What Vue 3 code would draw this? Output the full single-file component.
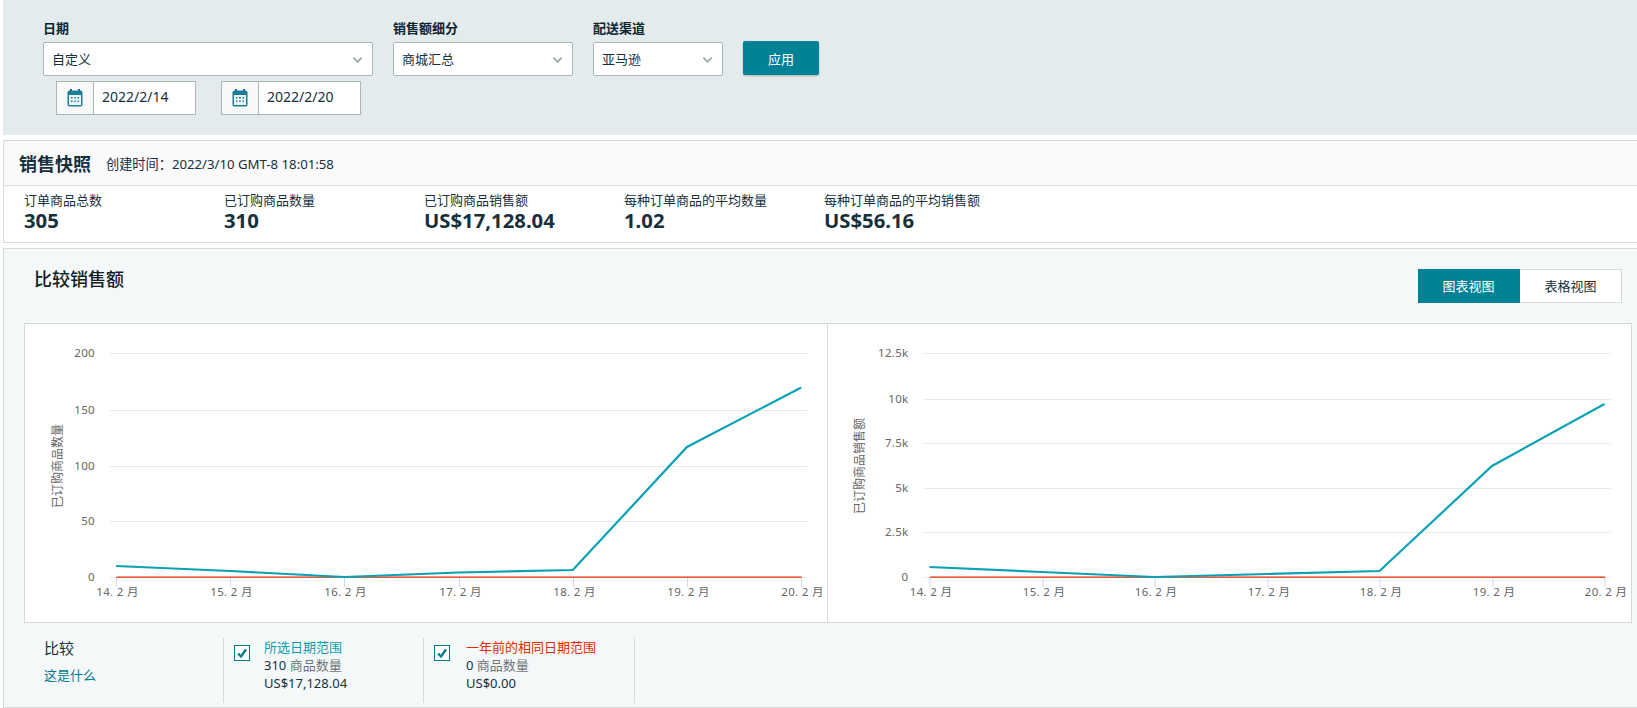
<script setup>
const metrics = [
  { label: '订单商品总数', value: '305', width: 200 },
  { label: '已订购商品数量', value: '310', width: 200 },
  { label: '已订购商品销售额', value: 'US$17,128.04', width: 200 },
  { label: '每种订单商品的平均数量', value: '1.02', width: 200 },
  { label: '每种订单商品的平均销售额', value: 'US$56.16', width: 240 },
]
const days = ['14. 2 月', '15. 2 月', '16. 2 月', '17. 2 月', '18. 2 月', '19. 2 月', '20. 2 月']
const makeChart = (o) => ({
  ...o,
  xs: days.map((_, i) => Math.round(o.x0 + i * o.dx) + 0.5),
  points: o.ys.map((y, i) => `${o.x0 + i * o.dx},${y}`).join(' '),
})
const charts = [
  makeChart({
    viewBox: '25 324 802 298', title: '已订购商品数量', titleX: 62, tickX: 95, gridX1: 110, gridX2: 807,
    x0: 116, dx: 114.2,
    ticks: [['200', 353], ['150', 410], ['100', 466], ['50', 521], ['0', 577]],
    ys: [566, 571, 577, 572.5, 570, 447, 387.5],
  }),
  makeChart({
    viewBox: '828 324 802 298', title: '已订购商品销售额', titleX: 863, tickX: 908, gridX1: 923, gridX2: 1610,
    x0: 929, dx: 112.5,
    ticks: [['12.5k', 353], ['10k', 399], ['7.5k', 443], ['5k', 488], ['2.5k', 532], ['0', 577]],
    ys: [567, 572, 577, 574, 571, 466, 404],
  }),
]
const legends = [
  { name: '所选日期范围', color: 'teal', count: '310', total: 'US$17,128.04' },
  { name: '一年前的相同日期范围', color: 'red', count: '0', total: 'US$0.00' },
]
</script>

<template>
  <div class="page">
    <section class="filters">
      <div class="field field-date">
        <div class="label">日期</div>
        <div class="select"><span>自定义</span><svg class="chev" viewBox="0 0 12 8"><path d="M1.5 1.5 6 6l4.5-4.5" /></svg></div>
        <div class="dates">
          <div v-for="d in ['2022/2/14', '2022/2/20']" :key="d" class="date">
            <div class="date-icon">
              <svg width="16" height="18" viewBox="0 0 16 18">
                <rect x="3" y="0" width="2" height="3" fill="#1a6f86" />
                <rect x="11" y="0" width="2" height="3" fill="#1a6f86" />
                <rect x="0.5" y="1.5" width="15" height="16" rx="2" fill="#1b7f99" />
                <rect x="2" y="6" width="12" height="10" fill="#eaf3f6" />
                <g fill="#1b7f99">
                  <rect x="4" y="8" width="1.5" height="1.5" /><rect x="7.2" y="8" width="1.5" height="1.5" /><rect x="10.5" y="8" width="1.5" height="1.5" />
                  <rect x="4" y="11.5" width="1.5" height="1.5" /><rect x="7.2" y="11.5" width="1.5" height="1.5" /><rect x="10.5" y="11.5" width="1.5" height="1.5" />
                </g>
              </svg>
            </div>
            <div class="date-value">{{ d }}</div>
          </div>
        </div>
      </div>
      <div class="field field-breakdown">
        <div class="label">销售额细分</div>
        <div class="select"><span>商城汇总</span><svg class="chev" viewBox="0 0 12 8"><path d="M1.5 1.5 6 6l4.5-4.5" /></svg></div>
      </div>
      <div class="field field-channel">
        <div class="label">配送渠道</div>
        <div class="select"><span>亚马逊</span><svg class="chev" viewBox="0 0 12 8"><path d="M1.5 1.5 6 6l4.5-4.5" /></svg></div>
      </div>
      <button class="apply">应用</button>
    </section>

    <section class="snapshot">
      <header class="snap-head">
        <h2>销售快照</h2>
        <span class="stamp">创建时间：2022/3/10 GMT-8 18:01:58</span>
      </header>
      <div class="metrics">
        <div v-for="m in metrics" :key="m.label" class="metric" :style="{ width: m.width + 'px' }">
          <div class="metric-label">{{ m.label }}</div>
          <div class="metric-value">{{ m.value }}</div>
        </div>
      </div>
    </section>

    <section class="compare">
      <header class="compare-head">
        <h2>比较销售额</h2>
        <div class="toggle">
          <div class="tab active">图表视图</div>
          <div class="tab">表格视图</div>
        </div>
      </header>
      <div class="panel">
        <div v-for="c in charts" :key="c.title" class="chart">
          <svg class="chart-svg" :viewBox="c.viewBox">
            <g v-for="t in c.ticks" :key="t[0]">
              <line :x1="c.gridX1" :x2="c.gridX2" :y1="t[1] + 0.5" :y2="t[1] + 0.5" class="grid" />
              <text :x="c.tickX" :y="t[1] + 4.4" text-anchor="end" class="tick">{{ t[0] }}</text>
            </g>
            <g v-for="(d, i) in days" :key="d">
              <line :x1="c.xs[i]" :x2="c.xs[i]" y1="577" y2="587" class="xtick" />
              <text :x="c.xs[i] + 1" y="596" text-anchor="middle" class="tick">{{ d }}</text>
            </g>
            <text :transform="`translate(${c.titleX} 466) rotate(-90)`" text-anchor="middle" class="axis-title">{{ c.title }}</text>
            <line :x1="c.xs[0]" :x2="c.xs[6]" y1="577" y2="577" class="red-line" />
            <polyline :points="c.points" class="teal-line" />
          </svg>
        </div>
      </div>
      <div class="legend">
        <div class="legend-intro">
          <div class="legend-title">比较</div>
          <div class="legend-link">这是什么</div>
        </div>
        <div v-for="l in legends" :key="l.name" class="legend-item" :class="l.color">
          <div class="check">
            <svg width="12" height="12" viewBox="0 0 12 12"><path d="M2 6.5 5 9.5 10 2.5" /></svg>
          </div>
          <div class="legend-text">
            <div class="legend-name">{{ l.name }}</div>
            <div class="legend-count"><b>{{ l.count }}</b> 商品数量</div>
            <div class="legend-total">{{ l.total }}</div>
          </div>
        </div>
      </div>
    </section>
  </div>
</template>

<style>
html, body { background: #fff; }
</style>

<style scoped>
.page {
  height: 708px;
  overflow: hidden;
  background: #fff;
  color: #16303c;
  font-family: "Noto Sans", "Noto Sans CJK SC", sans-serif;
  font-size: 13px;
}
.filters {
  display: flex;
  align-items: flex-start;
  gap: 20px;
  height: 135px;
  box-sizing: border-box;
  margin-left: 3px;
  padding: 19px 0 0 40px;
  background: #e3ebed;
}
.label {
  height: 23px;
  line-height: 19px;
  font-weight: 700;
  color: #10242e;
}
.field-date { width: 330px; }
.field-breakdown { width: 180px; }
.field-channel { width: 130px; }
.select {
  display: flex;
  align-items: center;
  justify-content: space-between;
  height: 34px;
  box-sizing: border-box;
  padding: 0 8px;
  background: #fff;
  border: 1px solid #a9b7b8;
  border-radius: 2px;
}
.select span { margin-bottom: 2px; }
.chev { width: 11px; height: 8px; fill: none; stroke: #9aa3a3; stroke-width: 1.8; margin: 1px 1px 0 0; }
.dates {
  display: flex;
  gap: 25px;
  margin-top: 5px;
  padding-left: 13px;
}
.date {
  display: flex;
  width: 140px;
  height: 34px;
  box-sizing: border-box;
  background: #fff;
  border: 1px solid #a9b7b8;
}
.date-icon {
  display: flex;
  align-items: center;
  justify-content: center;
  width: 36px;
  background: #f7f9f9;
  border-right: 1px solid #a9b7b8;
}
.date-value { padding-left: 8px; line-height: 30px; font-size: 14px; }
.apply {
  width: 76px;
  height: 34px;
  margin-top: 22px;
  border: 0;
  border-radius: 2px;
  background: #008296;
  color: #fff;
  font: inherit;
  box-shadow: 0 1px 2px rgba(0, 0, 0, .25);
}
.snapshot {
  height: 103px;
  box-sizing: border-box;
  margin: 5px 0 0 3px;
  border: 1px solid #d5dbdb;
  border-right: 0;
}
.snap-head {
  display: flex;
  align-items: center;
  height: 45px;
  box-sizing: border-box;
  padding-left: 15px;
  background: #fafafa;
  border-bottom: 1px solid #d5dbdb;
}
.snap-head h2 { margin: 0; font-size: 18px; font-weight: 700; }
.stamp { margin-left: 15px; font-size: 13.2px; }
.metrics { display: flex; padding: 5px 0 0 20px; }
.metric-label { line-height: 18px; }
.metric-value { line-height: 22px; font-size: 20.3px; font-weight: 700; }
.compare {
  height: 460px;
  box-sizing: border-box;
  margin: 5px 0 0 3px;
  padding: 0 5px 0 20px;
  background: #f5f8f9;
  border: 1px solid #d5dbdb;
  border-right: 0;
}
.compare-head {
  display: flex;
  justify-content: space-between;
  height: 74px;
  padding: 20px 10px 0 10px;
  box-sizing: border-box;
}
.compare-head h2 { margin: -2px 0 0; font-size: 18px; line-height: 24px; font-weight: 500; color: #0f1f28; }
.toggle { display: flex; height: 34px; }
.tab {
  width: 102px;
  box-sizing: border-box;
  line-height: 32px;
  text-align: center;
  background: #fff;
  border: 1px solid #d5dbdb;
  border-left: 0;
}
.tab.active { background: #008296; border-color: #008296; color: #fff; }
.panel {
  display: flex;
  height: 300px;
  box-sizing: border-box;
  background: #fff;
  border: 1px solid #d5dbdb;
}
.chart { flex: 1; min-width: 0; }
.chart:first-child { flex: 0 0 803px; box-sizing: border-box; border-right: 1px solid #d5dbdb; }
.chart-svg { display: block; width: 100%; height: 298px; }
.grid { stroke: #e6e8e9; stroke-width: 1; }
.xtick { stroke: #ccd6eb; stroke-width: 1; }
.tick { font-size: 11.5px; fill: #666; letter-spacing: .3px; }
.axis-title { font-size: 12px; fill: #666; }
.red-line { stroke: #e32d00; stroke-width: 1.25; }
.teal-line { fill: none; stroke: #0aa2b4; stroke-width: 2.2; }
.legend { display: flex; margin-top: 15px; height: 65px; }
.legend-intro {
  width: 200px;
  box-sizing: border-box;
  padding-left: 20px;
  border-right: 1px solid #d5dbdb;
}
.legend-title { font-size: 15px; line-height: 22px; margin-top: -1px; }
.legend-link { margin-top: 6px; font-size: 13px; color: #007b8f; }
.legend-item {
  display: flex;
  width: 200px;
  box-sizing: border-box;
  padding: 7px 0 0 10px;
  border-right: 1px solid #d5dbdb;
}
.legend-item.red { width: 211px; }
.check {
  display: flex;
  align-items: center;
  justify-content: center;
  width: 16px;
  height: 16px;
  box-sizing: border-box;
  background: #fff;
  border: 1px solid #007b8f;
}
.check path { fill: none; stroke: #007b8f; stroke-width: 2.4; }
.legend-text { margin-left: 14px; line-height: 18px; margin-top: -7px; }
.legend-item.red .legend-text { margin-left: 16px; }
.legend-name { font-size: 13px; }
.teal .legend-name { color: #0a9fb0; }
.red .legend-name { color: #e32d00; }
.legend-count { color: #6c7778; }
.legend-count b { font-weight: 400; color: #16303c; }
</style>
